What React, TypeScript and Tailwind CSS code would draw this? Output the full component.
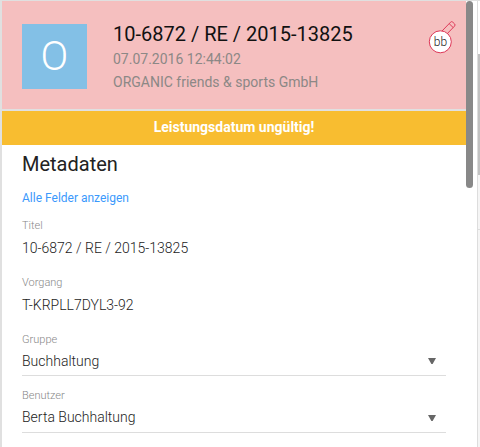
import React from "react";

function Caret() {
  return (
    <svg width="8" height="6" viewBox="0 0 8 6" className="mr-[10px] mb-[11px] shrink-0 self-end">
      <path d="M0 0H8L4.6 6H3.4Z" fill="#666" />
    </svg>
  );
}

function Label({ text }: { text: string }) {
  return <div className="h-[14px] text-[11px] leading-[14px] font-light text-[#888]">{text}</div>;
}

function TextField({ label, value }: { label: string; value: string }) {
  return (
    <div className="h-[57px]">
      <Label text={label} />
      <div className="text-sm leading-[30px] font-light text-[#1c1c1c]">{value}</div>
    </div>
  );
}

function SelectField({ label, value, height }: { label: string; value: string; height: string }) {
  return (
    <div className="h-14">
      <Label text={label} />
      <div className={`flex items-start justify-between border-b border-[#ddd] text-sm font-light text-[#1c1c1c] ${height}`}>
        <span className="leading-[29px]">{value}</span>
        <Caret />
      </div>
    </div>
  );
}

function SignatureBadge() {
  return (
    <svg width="34" height="38" viewBox="0 0 34 38" className="mt-[19px] ml-auto mr-[5px] shrink-0">
      <g transform="translate(17 13) rotate(-46)" fill="none" stroke="#dd3555" strokeWidth="0.9">
        <path d="M-1 -2.8H12.3Q13.9 -2.8 13.9 -1.2V1.2Q13.9 2.8 12.3 2.8H-1ZM10.3 -2.8V2.8" />
      </g>
      <circle cx="13.3" cy="21.8" r="11" fill="#fff" stroke="#dd3555" />
      <text x="13.5" y="26" textAnchor="middle" fontFamily="Roboto, sans-serif" fontSize="12" fontWeight="300" fill="#222">
        bb
      </text>
    </svg>
  );
}

export default function App() {
  return (
    <div className="flex h-[447px] w-[480px] overflow-hidden border-t border-l-2 border-[#e0e0e0] bg-white font-['Roboto',sans-serif]">
      <main className="w-[464px] shrink-0">
        <header className="flex h-[110px] border-b-2 border-[#e0e0e0] bg-[#f5bfbf]">
          <div className="mt-[23px] ml-5 flex size-[65px] shrink-0 items-center justify-center bg-[#83c0e6] text-[41px] font-light text-white">
            O
          </div>
          <div className="mt-[21px] ml-[26px] whitespace-nowrap text-[#8c8886]">
            <h1 className="text-xl leading-6 text-[#111]">10-6872 / RE / 2015-13825</h1>
            <div className="mt-[2px] text-sm leading-[23px]">07.07.2016 12:44:02</div>
            <div className="text-sm leading-[23px]">ORGANIC friends &amp; sports GmbH</div>
          </div>
          <SignatureBadge />
        </header>
        <div className="flex h-[34px] items-center justify-center bg-[#f8bd30] pb-[2px] text-sm font-bold text-white">
          Leistungsdatum ungültig!
        </div>
        <section className="pt-[7px] pr-5 pl-5">
          <h2 className="text-xl leading-6 text-[#222]">Metadaten</h2>
          <a className="mt-[14px] block text-xs leading-4 text-[#3b99fc]">Alle Felder anzeigen</a>
          <div className="mt-[13px]">
            <TextField label="Titel" value="10-6872 / RE / 2015-13825" />
            <TextField label="Vorgang" value="T-KRPLL7DYL3-92" />
            <SelectField label="Gruppe" value="Buchhaltung" height="h-[29px]" />
            <SelectField label="Benutzer" value="Berta Buchhaltung" height="h-[30px]" />
          </div>
        </section>
      </main>
      <div className="h-[187px] w-[7px] shrink-0 rounded-full bg-[#888]" />
      <aside className="ml-[4px] w-[3px] shrink-0 border-l border-[#ddd] bg-[#f5f5f5]">
        <div className="h-[53px] bg-white" />
        <div className="h-[121px] bg-[#c1c1c1]" />
        <div className="h-[55px] border-b border-[#ddd]" />
      </aside>
    </div>
  );
}
